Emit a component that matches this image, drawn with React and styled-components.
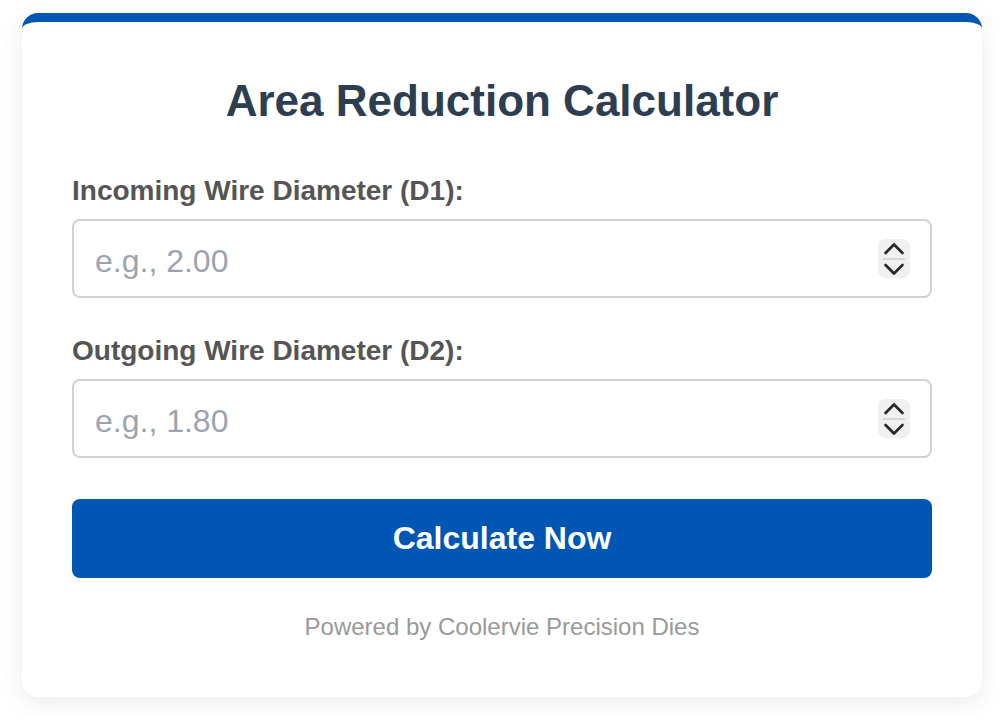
import React from "react";
import styled, { createGlobalStyle } from "styled-components";

const GlobalStyle = createGlobalStyle`
  html, body {
    margin: 0;
    padding: 0;
    background: #ffffff;
    font-family: "Liberation Sans", Arial, Helvetica, sans-serif;
  }
  * { box-sizing: border-box; }
`;

const Page = styled.div`
  padding: 13px 22px 20px;
`;

const Card = styled.div`
  max-width: 960px;
  margin: 0 auto;
  background: #ffffff;
  border-top: 9px solid #0056b3;
  border-radius: 16px;
  box-shadow: 0 6px 24px rgba(0, 0, 0, 0.08);
  padding: 54px 50px 56px;
  display: flex;
  flex-direction: column;
`;

const Title = styled.h2`
  margin: 0 0 49px;
  text-align: center;
  font-size: 44px;
  font-weight: 700;
  color: #2c3e50;
  line-height: normal;
`;

const Field = styled.div`
  display: flex;
  flex-direction: column;
  margin-bottom: ${(p) => p.$gap}px;
`;

const Label = styled.label`
  font-size: 28px;
  font-weight: 700;
  color: #555555;
  line-height: normal;
  margin-bottom: 12px;
`;

const InputWrap = styled.div`
  position: relative;
`;

const Input = styled.input`
  width: 100%;
  height: 79px;
  padding: 6px 70px 0 21px;
  border: 2px solid #d2d2d2;
  border-radius: 8px;
  font-family: "Liberation Sans", Arial, Helvetica, sans-serif;
  font-size: 32px;
  color: #333;
  background: #fff;
  outline: none;
  -moz-appearance: textfield;
  &::-webkit-outer-spin-button,
  &::-webkit-inner-spin-button {
    -webkit-appearance: none;
    margin: 0;
  }
  &::placeholder {
    color: #9ca3af;
  }
`;

const Spinner = styled.svg`
  position: absolute;
  right: 22px;
  top: 20px;
  width: 32px;
  height: 39px;
  pointer-events: none;
`;

const Button = styled.button`
  height: 79px;
  width: 100%;
  border: none;
  border-radius: 8px;
  background: #0056b3;
  color: #ffffff;
  font-family: "Liberation Sans", Arial, Helvetica, sans-serif;
  font-size: 32px;
  font-weight: 700;
  cursor: pointer;
`;

const Footer = styled.p`
  margin: 35px 0 0;
  text-align: center;
  font-size: 24px;
  color: #999999;
  line-height: normal;
`;

function SpinIcon() {
  return (
    <Spinner viewBox="0 0 32 39">
      <rect x="0" y="0" width="32" height="39" rx="8" fill="#f0f0f0" />
      <path d="M7.5 14 L16 5.5 L24.5 14" fill="none" stroke="#262626" strokeWidth="2.6" strokeLinecap="round" strokeLinejoin="round" />
      <line x1="5" y1="20" x2="27" y2="20" stroke="#cfcfcf" strokeWidth="1.5" />
      <path d="M7.5 26 L16 34.5 L24.5 26" fill="none" stroke="#262626" strokeWidth="2.6" strokeLinecap="round" strokeLinejoin="round" />
    </Spinner>
  );
}

export default function App() {
  return (
    <>
      <GlobalStyle />
      <Page>
        <Card>
          <Title>Area Reduction Calculator</Title>
          <Field $gap={37}>
            <Label htmlFor="d1">Incoming Wire Diameter (D1):</Label>
            <InputWrap>
              <Input id="d1" type="number" placeholder="e.g., 2.00" />
              <SpinIcon />
            </InputWrap>
          </Field>
          <Field $gap={41}>
            <Label htmlFor="d2">Outgoing Wire Diameter (D2):</Label>
            <InputWrap>
              <Input id="d2" type="number" placeholder="e.g., 1.80" />
              <SpinIcon />
            </InputWrap>
          </Field>
          <Button type="button">Calculate Now</Button>
          <Footer>Powered by Coolervie Precision Dies</Footer>
        </Card>
      </Page>
    </>
  );
}
